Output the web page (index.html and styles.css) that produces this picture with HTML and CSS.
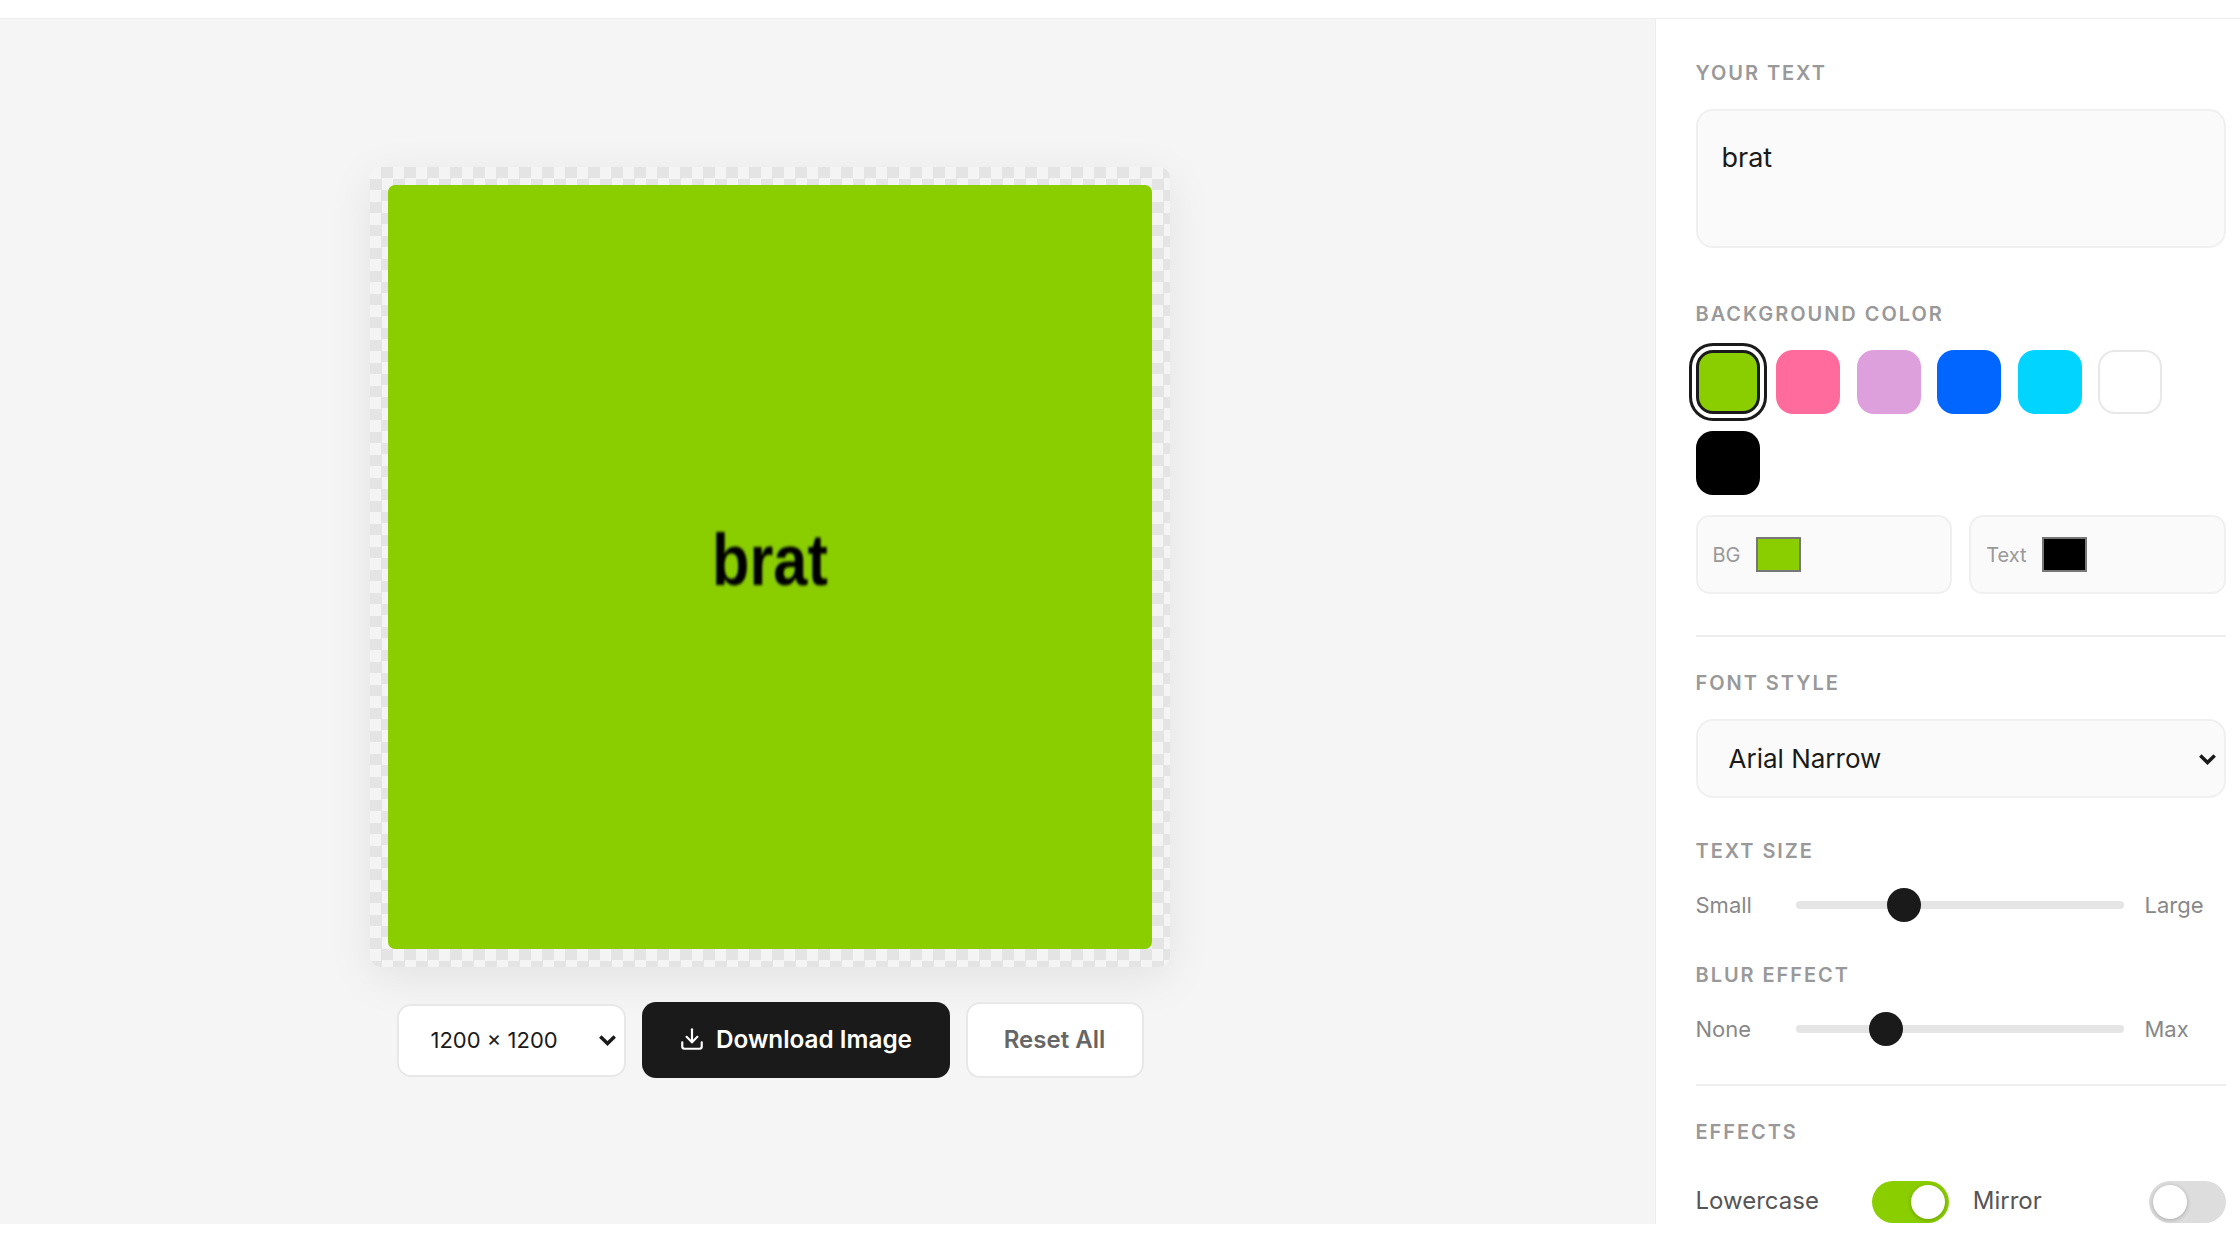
FILE: index.html
```html
<!DOCTYPE html>
<html lang="en">
<head>
<meta charset="utf-8">
<title>Brat Generator</title>
<link rel="stylesheet" href="styles.css">
</head>
<body>
<header class="topbar"></header>
<div class="app">
  <main class="stage">
    <div class="frame">
      <div class="canvas"><span class="brat">brat</span></div>
    </div>
    <div class="actions">
      <div class="select-wrap size-wrap">
        <select class="size-select"><option>1200 × 1200</option></select>
        <svg class="chev" viewBox="0 0 16 16"><path d="M3 5.5 8 10.5 13 5.5"/></svg>
      </div>
      <button class="btn-primary">
        <svg class="dl" viewBox="0 0 24 24"><path d="M21 15v4a2 2 0 0 1-2 2H5a2 2 0 0 1-2-2v-4"/><path d="M7 10l5 5 5-5"/><path d="M12 15V3"/></svg>
        Download Image
      </button>
      <button class="btn-ghost">Reset All</button>
    </div>
  </main>
  <aside class="panel">
    <div class="label">Your Text</div>
    <textarea class="text-input">brat</textarea>

    <div class="label section">Background Color</div>
    <div class="swatches">
      <div class="swatch sw-green selected"></div>
      <div class="swatch sw-pink"></div>
      <div class="swatch sw-plum"></div>
      <div class="swatch sw-blue"></div>
      <div class="swatch sw-cyan"></div>
      <div class="swatch sw-white"></div>
      <div class="swatch sw-black"></div>
    </div>
    <div class="color-row">
      <label class="color-field"><span>BG</span><input class="color-input" type="color" value="#8ace00"></label>
      <label class="color-field"><span>Text</span><input class="color-input" type="color" value="#000000"></label>
    </div>
    <hr class="rule">

    <div class="label">Font Style</div>
    <div class="select-wrap">
      <select class="font-select"><option>Arial Narrow</option></select>
      <svg class="chev chev-font" viewBox="0 0 16 16"><path d="M3 5.5 8 10.5 13 5.5"/></svg>
    </div>

    <div class="label section-tight">Text Size</div>
    <div class="slider-row">
      <span class="slider-end">Small</span>
      <input class="slider" type="range" min="0" max="100" value="31">
      <span class="slider-end end-right">Large</span>
    </div>

    <div class="label section-tight">Blur Effect</div>
    <div class="slider-row">
      <span class="slider-end">None</span>
      <input class="slider" type="range" min="0" max="100" value="25">
      <span class="slider-end end-right">Max</span>
    </div>
    <hr class="rule rule-low">

    <div class="label">Effects</div>
    <div class="toggles">
      <div class="toggle-item"><span>Lowercase</span><div class="toggle on"><i></i></div></div>
      <div class="toggle-item"><span>Mirror</span><div class="toggle"><i></i></div></div>
    </div>
  </aside>
</div>
</body>
</html>
```

FILE: styles.css
```css
* { box-sizing: border-box; }
html, body { margin: 0; background: #fff; font-family: Inter, "Liberation Sans", sans-serif; color: #1a1a1a; }
body { height: 1260px; overflow: hidden; }

.topbar { height: 19px; background: #fff; border-bottom: 1px solid #eee; }
.app { display: flex; height: 1205px; overflow: hidden; }

.stage {
  width: 1655px; flex: none; background: #f5f5f5; padding-right: 115px; padding-top: 2px;
  display: flex; flex-direction: column; align-items: center; justify-content: center; gap: 35px;
}
.frame {
  width: 800px; height: 800px; padding: 18px; border-radius: 11px;
  background: repeating-conic-gradient(#e4e4e4 0 25%, #f4f4f4 0 50%) 0 0 / 23px 23px;
  box-shadow: 0 11px 46px rgba(0, 0, 0, .08);
}
.canvas {
  width: 764px; height: 764px; border-radius: 7px; background: #8ace00;
  display: flex; align-items: center; justify-content: center; overflow: hidden;
}
.brat {
  display: inline-block; font: 700 73px/1 "Liberation Sans", sans-serif;
  color: #000; filter: blur(1.4px); transform: translateY(-8px) scaleX(.84);
}

.actions { display: flex; align-items: center; gap: 16px; }
.select-wrap { position: relative; }
.size-wrap { width: 229px; }
.size-select {
  appearance: none; width: 100%; height: 73px; padding: 0 32px; background: #fff;
  border: 2px solid #e8e8e8; border-radius: 14px; font: 400 22px Inter, sans-serif; color: #1a1a1a;
}
.chev { position: absolute; right: 7px; top: 50%; width: 23px; height: 23px; transform: translateY(-50%); fill: none; stroke: #1a1a1a; stroke-width: 2.4; }
.chev-font { right: 7px; }
.btn-primary {
  width: 308px; height: 76px; padding: 0 0 2px; background: #1a1a1a; color: #fff; border: 0; border-radius: 14px;
  display: flex; align-items: center; justify-content: center; gap: 11px;
  font: 600 24.3px Inter, sans-serif;
}
.dl { width: 26px; height: 26px; fill: none; stroke: #fff; stroke-width: 2; stroke-linecap: round; stroke-linejoin: round; }
.btn-ghost {
  width: 178px; height: 76px; padding: 0 0 2px; background: #fff; color: #666; border: 2px solid #e8e8e8; border-radius: 14px;
  font: 600 24px Inter, sans-serif;
}

.panel { flex: 1; min-width: 0; border-left: 1px solid #eee; padding: 44px 14px 0 39.5px; overflow: hidden; background: #fff; }
.label { height: 20px; line-height: 20px; margin-bottom: 26px; font-size: 20px; font-weight: 600; letter-spacing: 1.95px; text-transform: uppercase; color: #999; }
.section { margin-top: 56px; }
.section-tight { margin-top: 43px; margin-bottom: 27px; }

.text-input {
  display: block; width: 100%; height: 139px; padding: 29px 24px; resize: none; outline: 0;
  background: #fafafa; border: 2px solid #f0f0f0; border-radius: 17px;
  font: 400 27px/36px Inter, sans-serif; color: #1a1a1a;
}

.swatches { display: flex; flex-wrap: wrap; gap: 17px 16.5px; }
.swatch { width: 64px; height: 64px; border-radius: 17px; }
.sw-green { background: #8ace00; }
.sw-pink { background: #ff6b9d; }
.sw-plum { background: #dda0dd; }
.sw-blue { background: #0066ff; }
.sw-cyan { background: #00d4ff; }
.sw-white { background: #fff; border: 2px solid #e8e8e8; }
.sw-black { background: #000; }
.selected { border: 3px solid #1a1a1a; box-shadow: 0 0 0 4px #fff, 0 0 0 7px #1a1a1a; }

.color-row { display: grid; grid-template-columns: 1fr 1fr; gap: 17px; margin-top: 20px; }
.color-field {
  height: 79px; padding: 0 15px; display: flex; align-items: center; gap: 15px;
  background: #fafafa; border: 2px solid #f0f0f0; border-radius: 14px;
  font-size: 20px; color: #999;
}
.color-input { appearance: none; width: 45px; height: 35px; padding: 0; border: 0; background: none; }
.color-input::-webkit-color-swatch-wrapper { padding: 0; }
.color-input::-webkit-color-swatch { border: 2px solid #777; border-radius: 0; }

.rule { margin: 41px 0 36px; border: 0; border-top: 2px solid #eee; height: 0; }
.rule-low { margin-top: 38px; }

.font-select {
  appearance: none; display: block; width: 100%; height: 79px; padding: 0 31px;
  background: #fafafa; border: 2px solid #f0f0f0; border-radius: 17px;
  font: 400 26px Inter, sans-serif; color: #1a1a1a;
}

.slider-row { display: flex; align-items: center; height: 34px; }
.slider-end { width: 100px; flex: none; font-size: 22px; color: #888; }
.end-right { margin-left: 21px; width: auto; }
.slider { appearance: none; flex: none; width: 328px; height: 34px; margin: 0; background: none; }
.slider::-webkit-slider-runnable-track { height: 8px; border-radius: 4px; background: #e5e5e5; }
.slider::-webkit-slider-thumb { appearance: none; width: 34px; height: 34px; margin-top: -13px; border-radius: 50%; background: #1a1a1a; }

.toggles { display: grid; grid-template-columns: 1fr 1fr; gap: 24px; margin-top: 39px; }
.toggle-item { display: flex; justify-content: space-between; align-items: center; font-size: 24px; color: #555; }
.toggle-item span { padding-bottom: 4px; }
.toggle { position: relative; width: 77px; height: 42px; border-radius: 21px; background: #ddd; }
.toggle.on { background: #8ace00; }
.toggle i { position: absolute; top: 4px; left: 4px; width: 34px; height: 34px; border-radius: 50%; background: #fff; box-shadow: 0 1px 4px rgba(0,0,0,.25); }
.toggle.on i { left: 39px; }
```
